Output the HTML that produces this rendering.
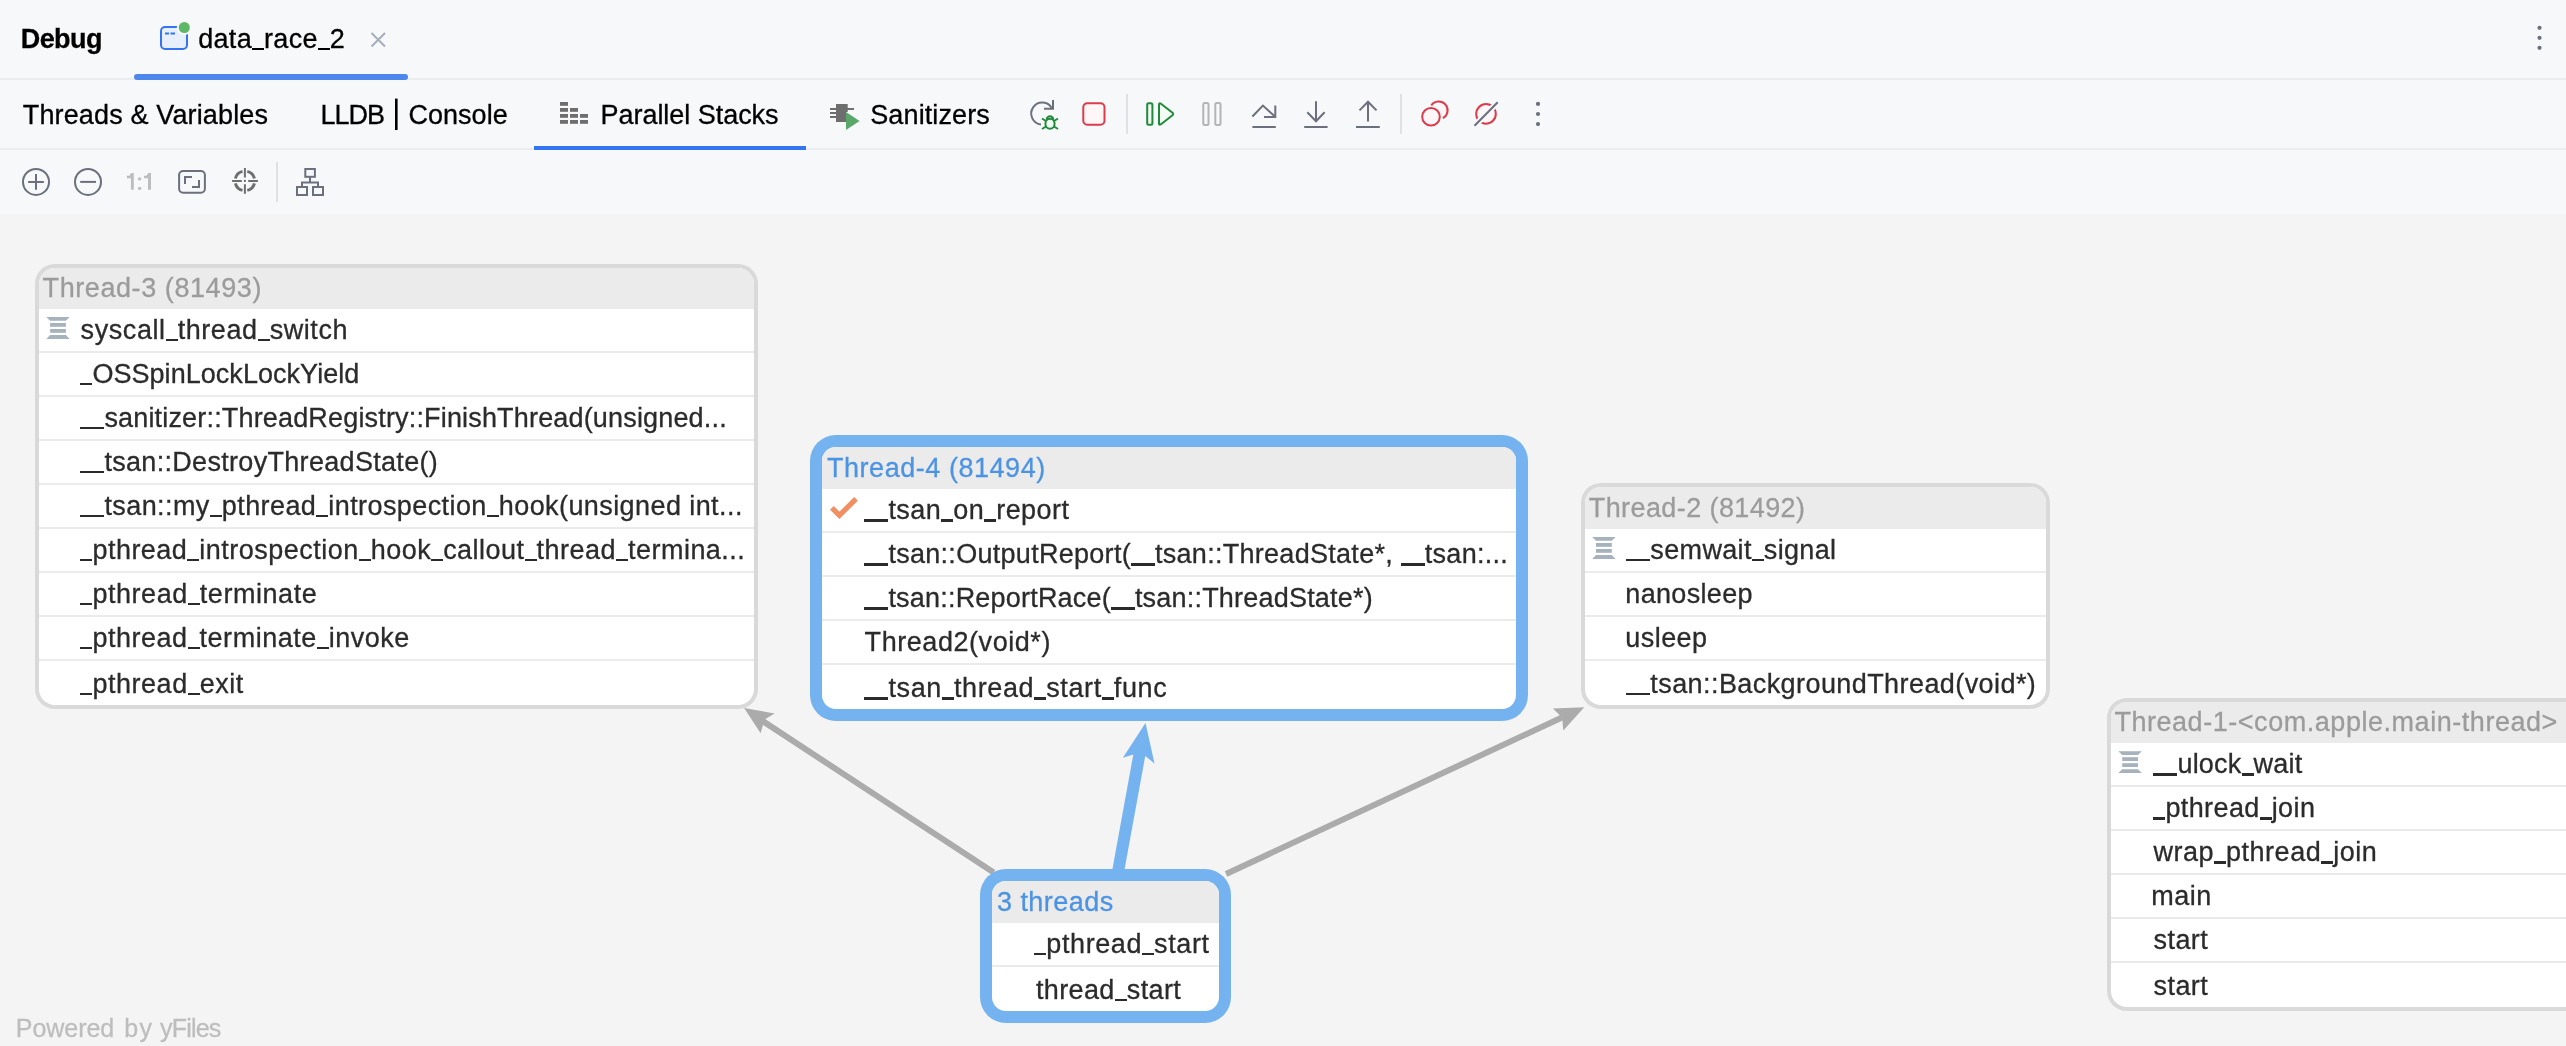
<!DOCTYPE html>
<html><head><meta charset="utf-8"><style>
html,body{margin:0;padding:0;width:2566px;height:1046px;overflow:hidden;background:#F4F4F4;}
.u{display:inline-block;width:12px;height:2.2px;background:currentColor;vertical-align:-2.4px;}
.t{position:absolute;white-space:pre;line-height:1;font-family:"Liberation Sans",sans-serif;}
#bar1{position:absolute;left:0;top:0;width:2566px;height:78px;background:#F7F8FA;}
#bl1{position:absolute;left:0;top:78px;width:2566px;height:2px;background:#EBECF0;}
#bar2{position:absolute;left:0;top:80px;width:2566px;height:68px;background:#F7F8FA;}
#bl2{position:absolute;left:0;top:148px;width:2566px;height:2px;background:#EBECF0;}
#bar3{position:absolute;left:0;top:150px;width:2566px;height:64px;background:#F7F8FA;}
svg{position:absolute;left:0;top:0;}
</style></head><body>
<div id="bar1"></div><div id="bl1"></div><div id="bar2"></div><div id="bl2"></div><div id="bar3"></div>
<svg width="2566" height="1046" viewBox="0 0 2566 1046">
<rect x="161" y="27" width="26" height="22" rx="4" fill="#E7EFFD" stroke="#3574F0" stroke-width="2"/>
<rect x="165" y="32.5" width="4" height="2" fill="#3574F0"/><rect x="170.5" y="32.5" width="4.5" height="2" fill="#3574F0"/>
<circle cx="184.3" cy="27.5" r="7.5" fill="#F7F8FA"/><circle cx="184.3" cy="27.5" r="5.5" fill="#5FB865"/>
<path d="M371.5 33L385 46.5M385 33L371.5 46.5" stroke="#A8ADBD" stroke-width="2"/>
<rect x="134" y="74" width="274" height="6" rx="3" fill="#4D87EB"/>
<rect x="395" y="98.6" width="2.6" height="31.4" fill="#000"/>
<rect x="560" y="102" width="8" height="3.8" fill="#6E6E6E"/>
<rect x="560" y="108" width="8" height="3.8" fill="#6E6E6E"/>
<rect x="560" y="114" width="8" height="3.8" fill="#6E6E6E"/>
<rect x="560" y="120" width="8" height="3.8" fill="#6E6E6E"/>
<rect x="570" y="108" width="8" height="3.8" fill="#6E6E6E"/>
<rect x="570" y="114" width="8" height="3.8" fill="#6E6E6E"/>
<rect x="570" y="120" width="8" height="3.8" fill="#6E6E6E"/>
<rect x="580" y="114" width="8" height="3.8" fill="#6E6E6E"/>
<rect x="580" y="120" width="8" height="3.8" fill="#6E6E6E"/>
<rect x="534" y="146" width="272" height="4" fill="#3574F0"/>
<path d="M836 104H847.7V108H854V110H847.7V112H846V122H836Z" fill="#6E6E6E"/>
<rect x="830" y="108" width="6" height="2" fill="#6E6E6E"/><rect x="830" y="112" width="6" height="2" fill="#6E6E6E"/><rect x="830" y="116" width="6" height="2" fill="#6E6E6E"/>
<path d="M846 112L859.6 121L846 130Z" fill="#59A869"/>
<path d="M1041 124.5A11 11 0 1 1 1052 108.5" fill="none" stroke="#6C707E" stroke-width="2"/>
<path d="M1044 108.7H1053V100" fill="none" stroke="#6C707E" stroke-width="2"/>
<g fill="none" stroke="#208A3C" stroke-width="2"><ellipse cx="1050" cy="123.7" rx="4.6" ry="5" fill="#F2FCF3"/><path d="M1046.8 119.5A3.2 3.2 0 0 1 1053.2 119.5"/><path d="M1042 118.5L1046 121M1058 118.5L1054 121M1042 129L1046 126.5M1058 129L1054 126.5"/></g>
<rect x="1083.3" y="103.2" width="21.2" height="21.6" rx="4" fill="#FFF7F7" stroke="#DB3B4B" stroke-width="2"/>
<rect x="1126" y="94" width="2" height="40" fill="#DFE1E5"/>
<rect x="1400" y="94" width="2" height="40" fill="#DFE1E5"/>
<rect x="1147.2" y="103.2" width="5.2" height="21.6" rx="1.5" fill="#F2FCF3" stroke="#208A3C" stroke-width="2"/>
<path d="M1159 104.5V123.5Q1159 125.5 1161 124.2L1172.5 115.2Q1173.8 114 1172.5 112.8L1161 103.8Q1159 102.5 1159 104.5Z" fill="#F2FCF3" stroke="#208A3C" stroke-width="2"/>
<rect x="1203.3" y="103.1" width="5.2" height="21.8" rx="1.5" fill="none" stroke="#B4B4B4" stroke-width="2"/>
<rect x="1215.3" y="103.1" width="5.2" height="21.8" rx="1.5" fill="none" stroke="#B4B4B4" stroke-width="2"/>
<g fill="none" stroke="#6C707E" stroke-width="2"><path d="M1252.4 116.5L1262.9 105.6L1275 116.5"/><path d="M1264 117H1275.3V105.5"/></g>
<rect x="1252.4" y="126" width="23.4" height="2" fill="#6C707E"/>
<g fill="none" stroke="#6C707E" stroke-width="2"><path d="M1316 101.3V121"/><path d="M1307.3 112.2L1316 121.2L1324.6 112.2"/></g>
<rect x="1304.2" y="126" width="23.4" height="2" fill="#6C707E"/>
<g fill="none" stroke="#6C707E" stroke-width="2"><path d="M1368 102V121.6"/><path d="M1359.5 110.4L1368 101.7L1376.5 110.4"/></g>
<rect x="1356" y="126" width="23.8" height="2" fill="#6C707E"/>
<path d="M1431.3 105.4A8.9 8.9 0 1 1 1442.9 118.2" fill="#FFF7F7" stroke="#DB3B4B" stroke-width="2"/>
<circle cx="1431" cy="116.8" r="8.8" fill="#FFF7F7" stroke="#DB3B4B" stroke-width="2"/>
<circle cx="1486" cy="113.9" r="9.8" fill="#FFF7F7" stroke="#DB3B4B" stroke-width="2"/>
<path d="M1474.5 125.8L1497.7 102.3" stroke="#F7F8FA" stroke-width="6"/>
<path d="M1474.5 125.8L1497.7 102.3" stroke="#6C707E" stroke-width="2"/>
<circle cx="1538" cy="103.9" r="2.1" fill="#6C707E"/>
<circle cx="1538" cy="114" r="2.1" fill="#6C707E"/>
<circle cx="1538" cy="124.1" r="2.1" fill="#6C707E"/>
<circle cx="2539.5" cy="27.8" r="2.1" fill="#6C707E"/>
<circle cx="2539.5" cy="37.8" r="2.1" fill="#6C707E"/>
<circle cx="2539.5" cy="47.8" r="2.1" fill="#6C707E"/>
<g fill="none" stroke="#6C707E" stroke-width="2"><circle cx="36" cy="181.9" r="13"/><path d="M28.1 181.9H43.9M36 174V189.8"/><circle cx="88" cy="181.9" r="13"/><path d="M80.2 181.9H96"/><rect x="179.1" y="171.1" width="25.8" height="21.7" rx="4"/><path d="M185 184V177H192"/><path d="M192 187H199V180"/></g>
<g fill="none" stroke="#6E6E6E"><path d="M254.40 183.30A9.8 9.8 0 0 1 247.30 190.40M242.50 190.40A9.8 9.8 0 0 1 235.40 183.30M235.40 178.50A9.8 9.8 0 0 1 242.50 171.40M247.30 171.40A9.8 9.8 0 0 1 254.40 178.50" stroke-width="3"/><path d="M244.9 168V177.6M244.9 184.3V193.8M232.1 180.9H241.8M248.2 180.9H257.9" stroke-width="2"/></g><rect x="243.9" y="179.9" width="2" height="2" fill="#6E6E6E"/>
<rect x="276" y="162" width="2" height="40" fill="#DFE1E5"/>
<g fill="#BDBDBD"><path d="M126.9 175.8H129.3L131.2 173H133.8V189.8H130.9V178.2H126.9Z"/><path d="M144 175.8H146.4L148.3 173H151V189.8H148V178.2H144Z"/><rect x="138.1" y="177.5" width="3.1" height="2.8"/><rect x="138.1" y="187" width="3.1" height="2.8"/></g>
<g fill="none" stroke="#6C707E" stroke-width="2"><rect x="305.3" y="169" width="9.6" height="7.8"/><rect x="297" y="187" width="10" height="8"/><rect x="313" y="187" width="10" height="8"/><path d="M310 177V182.5M302 187V182.5H318V187"/></g>
<line x1="993.7" y1="872.6" x2="762" y2="720.6" stroke="#ABABAB" stroke-width="6"/>
<polygon points="744.1,708 774.7,713.4 764.6,719.4 760.6,733.3" fill="#ABABAB"/>
<line x1="1226" y1="874" x2="1562" y2="717.5" stroke="#ABABAB" stroke-width="6"/>
<polygon points="1584.3,707.2 1552.9,708.4 1562.1,717.5 1563.3,730.5" fill="#ABABAB"/>
<line x1="1118" y1="872" x2="1139.5" y2="754" stroke="#75B2F0" stroke-width="12"/>
<polygon points="1145.5,723 1122.9,757.8 1133.3,754.4 1145.3,755.9 1154.5,763.6" fill="#75B2F0"/>
<rect x="35" y="264" width="723" height="445" rx="20" fill="#D9D9D9" />
<clipPath id="ct3"><rect x="39" y="268" width="715" height="437" rx="16"/></clipPath>
<g clip-path="url(#ct3)">
<rect x="39" y="268" width="715" height="437" fill="#FFFFFF"/>
<rect x="39" y="268" width="715" height="41" fill="#EBEBEB"/>
<rect x="39" y="351" width="715" height="2" fill="#EBEBEB"/>
<rect x="39" y="395" width="715" height="2" fill="#EBEBEB"/>
<rect x="39" y="439" width="715" height="2" fill="#EBEBEB"/>
<rect x="39" y="483" width="715" height="2" fill="#EBEBEB"/>
<rect x="39" y="527" width="715" height="2" fill="#EBEBEB"/>
<rect x="39" y="571" width="715" height="2" fill="#EBEBEB"/>
<rect x="39" y="615" width="715" height="2" fill="#EBEBEB"/>
<rect x="39" y="659" width="715" height="2" fill="#EBEBEB"/>
</g>
<rect x="810" y="435" width="718" height="286" rx="26" fill="#75B2F0" />
<clipPath id="ct4"><rect x="822" y="447" width="694" height="262" rx="14"/></clipPath>
<g clip-path="url(#ct4)">
<rect x="822" y="447" width="694" height="262" fill="#FFFFFF"/>
<rect x="822" y="447" width="694" height="42" fill="#EBEBEB"/>
<rect x="822" y="531" width="694" height="2" fill="#EBEBEB"/>
<rect x="822" y="575" width="694" height="2" fill="#EBEBEB"/>
<rect x="822" y="619" width="694" height="2" fill="#EBEBEB"/>
<rect x="822" y="663" width="694" height="2" fill="#EBEBEB"/>
</g>
<rect x="980" y="869" width="251" height="154" rx="26" fill="#75B2F0" />
<clipPath id="ct5"><rect x="992" y="881" width="227" height="130" rx="14"/></clipPath>
<g clip-path="url(#ct5)">
<rect x="992" y="881" width="227" height="130" fill="#FFFFFF"/>
<rect x="992" y="881" width="227" height="42" fill="#EBEBEB"/>
<rect x="992" y="965" width="227" height="2" fill="#EBEBEB"/>
</g>
<rect x="1581" y="483" width="469" height="226" rx="20" fill="#D9D9D9" />
<clipPath id="ct2"><rect x="1585" y="487" width="461" height="218" rx="16"/></clipPath>
<g clip-path="url(#ct2)">
<rect x="1585" y="487" width="461" height="218" fill="#FFFFFF"/>
<rect x="1585" y="487" width="461" height="42" fill="#EBEBEB"/>
<rect x="1585" y="571" width="461" height="2" fill="#EBEBEB"/>
<rect x="1585" y="615" width="461" height="2" fill="#EBEBEB"/>
<rect x="1585" y="659" width="461" height="2" fill="#EBEBEB"/>
</g>
<rect x="2107" y="698" width="533" height="313" rx="20" fill="#D9D9D9" />
<clipPath id="ct1"><rect x="2111" y="702" width="525" height="305" rx="16"/></clipPath>
<g clip-path="url(#ct1)">
<rect x="2111" y="702" width="525" height="305" fill="#FFFFFF"/>
<rect x="2111" y="702" width="525" height="41" fill="#EBEBEB"/>
<rect x="2111" y="785" width="525" height="2" fill="#EBEBEB"/>
<rect x="2111" y="829" width="525" height="2" fill="#EBEBEB"/>
<rect x="2111" y="873" width="525" height="2" fill="#EBEBEB"/>
<rect x="2111" y="917" width="525" height="2" fill="#EBEBEB"/>
<rect x="2111" y="961" width="525" height="2" fill="#EBEBEB"/>
</g>
<g fill="#A6B2BC"><path d="M46.3 317H69.69999999999999L65.9 320.8H50.099999999999994Z"/><rect x="50.099999999999994" y="323" width="15.8" height="3.8"/><rect x="50.099999999999994" y="329" width="15.8" height="3.8"/><path d="M50.099999999999994 335H65.9L69.69999999999999 338.9H46.3Z"/></g>
<g fill="#A6B2BC"><path d="M1592.2 537H1615.6000000000001L1611.8 540.8H1596.0Z"/><rect x="1596.0" y="543" width="15.8" height="3.8"/><rect x="1596.0" y="549" width="15.8" height="3.8"/><path d="M1596.0 555H1611.8L1615.6000000000001 558.9H1592.2Z"/></g>
<g fill="#A6B2BC"><path d="M2118.4 751.2H2141.8L2138.0 755.0H2122.2000000000003Z"/><rect x="2122.2000000000003" y="757.2" width="15.8" height="3.8"/><rect x="2122.2000000000003" y="763.2" width="15.8" height="3.8"/><path d="M2122.2000000000003 769.2H2138.0L2141.8 773.1H2118.4Z"/></g>
<path d="M831.9 507.8L839.4 515.4L856 498.8" fill="none" stroke="#F28F62" stroke-width="5.2" stroke-linecap="butt"/>
</svg>
<div id="txt" style="position:absolute;left:0;top:0;width:2566px;height:1046px;will-change:transform">
<div class="t" style="left:20.75px;top:26.14px;font-size:27px;font-weight:700;color:#000000;letter-spacing:-0.570px;-webkit-text-stroke:0.3px #000000">Debug</div>
<div class="t" style="left:198.16px;top:25.84px;font-size:27px;font-weight:400;color:#000000;letter-spacing:0.322px;-webkit-text-stroke:0.3px #000000">data<i class="u"></i>race<i class="u"></i>2</div>
<div class="t" style="left:22.76px;top:102.14px;font-size:27px;font-weight:400;color:#000000;letter-spacing:0.143px;-webkit-text-stroke:0.3px #000000">Threads &amp; Variables</div>
<div class="t" style="left:320.51px;top:101.74px;font-size:27px;font-weight:400;color:#000000;letter-spacing:-0.972px;-webkit-text-stroke:0.3px #000000">LLDB</div>
<div class="t" style="left:408.45px;top:101.74px;font-size:27px;font-weight:400;color:#000000;letter-spacing:0.036px;-webkit-text-stroke:0.3px #000000">Console</div>
<div class="t" style="left:600.51px;top:102.04px;font-size:27px;font-weight:400;color:#000000;letter-spacing:-0.036px;-webkit-text-stroke:0.3px #000000">Parallel Stacks</div>
<div class="t" style="left:870.26px;top:102.14px;font-size:27px;font-weight:400;color:#000000;letter-spacing:0.116px;-webkit-text-stroke:0.3px #000000">Sanitizers</div>
<div class="t" style="left:42.58px;top:274.94px;font-size:27px;font-weight:400;color:#9B9B9B;letter-spacing:0.580px;-webkit-text-stroke:0.3px #9B9B9B">Thread-3 (81493)</div>
<div class="t" style="left:80.58px;top:316.84px;font-size:27px;font-weight:400;color:#2B2B2B;letter-spacing:0.576px;-webkit-text-stroke:0.3px #2B2B2B">syscall<i class="u"></i>thread<i class="u"></i>switch</div>
<div class="t" style="left:80.42px;top:360.84px;font-size:27px;font-weight:400;color:#2B2B2B;letter-spacing:0.040px;-webkit-text-stroke:0.3px #2B2B2B"><i class="u"></i>OSSpinLockLockYield</div>
<div class="t" style="left:80.42px;top:404.84px;font-size:27px;font-weight:400;color:#2B2B2B;letter-spacing:0.169px;-webkit-text-stroke:0.3px #2B2B2B"><i class="u"></i><i class="u"></i>sanitizer::ThreadRegistry::FinishThread(unsigned...</div>
<div class="t" style="left:80.42px;top:448.84px;font-size:27px;font-weight:400;color:#2B2B2B;letter-spacing:0.309px;-webkit-text-stroke:0.3px #2B2B2B"><i class="u"></i><i class="u"></i>tsan::DestroyThreadState()</div>
<div class="t" style="left:80.42px;top:492.84px;font-size:27px;font-weight:400;color:#2B2B2B;letter-spacing:0.417px;-webkit-text-stroke:0.3px #2B2B2B"><i class="u"></i><i class="u"></i>tsan::my<i class="u"></i>pthread<i class="u"></i>introspection<i class="u"></i>hook(unsigned int...</div>
<div class="t" style="left:80.42px;top:536.84px;font-size:27px;font-weight:400;color:#2B2B2B;letter-spacing:0.479px;-webkit-text-stroke:0.3px #2B2B2B"><i class="u"></i>pthread<i class="u"></i>introspection<i class="u"></i>hook<i class="u"></i>callout<i class="u"></i>thread<i class="u"></i>termina...</div>
<div class="t" style="left:80.42px;top:581.04px;font-size:27px;font-weight:400;color:#2B2B2B;letter-spacing:0.546px;-webkit-text-stroke:0.3px #2B2B2B"><i class="u"></i>pthread<i class="u"></i>terminate</div>
<div class="t" style="left:80.42px;top:624.84px;font-size:27px;font-weight:400;color:#2B2B2B;letter-spacing:0.513px;-webkit-text-stroke:0.3px #2B2B2B"><i class="u"></i>pthread<i class="u"></i>terminate<i class="u"></i>invoke</div>
<div class="t" style="left:80.42px;top:670.74px;font-size:27px;font-weight:400;color:#2B2B2B;letter-spacing:0.529px;-webkit-text-stroke:0.3px #2B2B2B"><i class="u"></i>pthread<i class="u"></i>exit</div>
<div class="t" style="left:826.94px;top:455.14px;font-size:27px;font-weight:400;color:#4B93E4;letter-spacing:0.544px;-webkit-text-stroke:0.3px #4B93E4">Thread-4 (81494)</div>
<div class="t" style="left:864.42px;top:497.14px;font-size:27px;font-weight:400;color:#2B2B2B;letter-spacing:0.452px;-webkit-text-stroke:0.3px #2B2B2B"><i class="u"></i><i class="u"></i>tsan<i class="u"></i>on<i class="u"></i>report</div>
<div class="t" style="left:864.42px;top:541.14px;font-size:27px;font-weight:400;color:#2B2B2B;letter-spacing:0.285px;-webkit-text-stroke:0.3px #2B2B2B"><i class="u"></i><i class="u"></i>tsan::OutputReport(<i class="u"></i><i class="u"></i>tsan::ThreadState*, <i class="u"></i><i class="u"></i>tsan:...</div>
<div class="t" style="left:864.42px;top:585.14px;font-size:27px;font-weight:400;color:#2B2B2B;letter-spacing:0.201px;-webkit-text-stroke:0.3px #2B2B2B"><i class="u"></i><i class="u"></i>tsan::ReportRace(<i class="u"></i><i class="u"></i>tsan::ThreadState*)</div>
<div class="t" style="left:864.58px;top:629.14px;font-size:27px;font-weight:400;color:#2B2B2B;letter-spacing:0.556px;-webkit-text-stroke:0.3px #2B2B2B">Thread2(void*)</div>
<div class="t" style="left:864.42px;top:675.14px;font-size:27px;font-weight:400;color:#2B2B2B;letter-spacing:0.621px;-webkit-text-stroke:0.3px #2B2B2B"><i class="u"></i><i class="u"></i>tsan<i class="u"></i>thread<i class="u"></i>start<i class="u"></i>func</div>
<div class="t" style="left:1588.76px;top:494.84px;font-size:27px;font-weight:400;color:#9B9B9B;letter-spacing:0.411px;-webkit-text-stroke:0.3px #9B9B9B">Thread-2 (81492)</div>
<div class="t" style="left:1626.34px;top:536.84px;font-size:27px;font-weight:400;color:#2B2B2B;letter-spacing:0.349px;-webkit-text-stroke:0.3px #2B2B2B"><i class="u"></i><i class="u"></i>semwait<i class="u"></i>signal</div>
<div class="t" style="left:1625.31px;top:580.84px;font-size:27px;font-weight:400;color:#2B2B2B;letter-spacing:0.329px;-webkit-text-stroke:0.3px #2B2B2B">nanosleep</div>
<div class="t" style="left:1625.31px;top:624.84px;font-size:27px;font-weight:400;color:#2B2B2B;letter-spacing:0.444px;-webkit-text-stroke:0.3px #2B2B2B">usleep</div>
<div class="t" style="left:1626.34px;top:670.84px;font-size:27px;font-weight:400;color:#2B2B2B;letter-spacing:0.421px;-webkit-text-stroke:0.3px #2B2B2B"><i class="u"></i><i class="u"></i>tsan::BackgroundThread(void*)</div>
<div class="t" style="left:996.98px;top:889.04px;font-size:27px;font-weight:400;color:#4B93E4;letter-spacing:0.457px;-webkit-text-stroke:0.3px #4B93E4">3 threads</div>
<div class="t" style="left:1034.34px;top:931.04px;font-size:27px;font-weight:400;color:#2B2B2B;letter-spacing:0.596px;-webkit-text-stroke:0.3px #2B2B2B"><i class="u"></i>pthread<i class="u"></i>start</div>
<div class="t" style="left:1036.00px;top:977.04px;font-size:27px;font-weight:400;color:#2B2B2B;letter-spacing:0.366px;-webkit-text-stroke:0.3px #2B2B2B">thread<i class="u"></i>start</div>
<div class="t" style="left:2114.40px;top:709.14px;font-size:27px;font-weight:400;color:#9B9B9B;letter-spacing:0.540px;-webkit-text-stroke:0.3px #9B9B9B">Thread-1-&lt;com.apple.main-thread&gt;</div>
<div class="t" style="left:2153.42px;top:751.14px;font-size:27px;font-weight:400;color:#2B2B2B;letter-spacing:0.223px;-webkit-text-stroke:0.3px #2B2B2B"><i class="u"></i><i class="u"></i>ulock<i class="u"></i>wait</div>
<div class="t" style="left:2153.42px;top:795.14px;font-size:27px;font-weight:400;color:#2B2B2B;letter-spacing:0.390px;-webkit-text-stroke:0.3px #2B2B2B"><i class="u"></i>pthread<i class="u"></i>join</div>
<div class="t" style="left:2153.42px;top:839.14px;font-size:27px;font-weight:400;color:#2B2B2B;letter-spacing:0.520px;-webkit-text-stroke:0.3px #2B2B2B">wrap<i class="u"></i>pthread<i class="u"></i>join</div>
<div class="t" style="left:2151.31px;top:883.14px;font-size:27px;font-weight:400;color:#2B2B2B;letter-spacing:0.441px;-webkit-text-stroke:0.3px #2B2B2B">main</div>
<div class="t" style="left:2153.48px;top:927.14px;font-size:27px;font-weight:400;color:#2B2B2B;letter-spacing:0.460px;-webkit-text-stroke:0.3px #2B2B2B">start</div>
<div class="t" style="left:2153.48px;top:973.14px;font-size:27px;font-weight:400;color:#2B2B2B;letter-spacing:0.460px;-webkit-text-stroke:0.3px #2B2B2B">start</div>
<div class="t" style="left:15.78px;top:1015.84px;font-size:25px;font-weight:400;color:#BDBDBD;letter-spacing:-0.031px;-webkit-text-stroke:0.3px #BDBDBD">Powered</div>
<div class="t" style="left:124.30px;top:1015.84px;font-size:25px;font-weight:400;color:#BDBDBD;letter-spacing:1.296px;-webkit-text-stroke:0.3px #BDBDBD">by</div>
<div class="t" style="left:160.12px;top:1015.84px;font-size:25px;font-weight:400;color:#BDBDBD;letter-spacing:-0.813px;-webkit-text-stroke:0.3px #BDBDBD">yFiles</div>
</div>
</body></html>
